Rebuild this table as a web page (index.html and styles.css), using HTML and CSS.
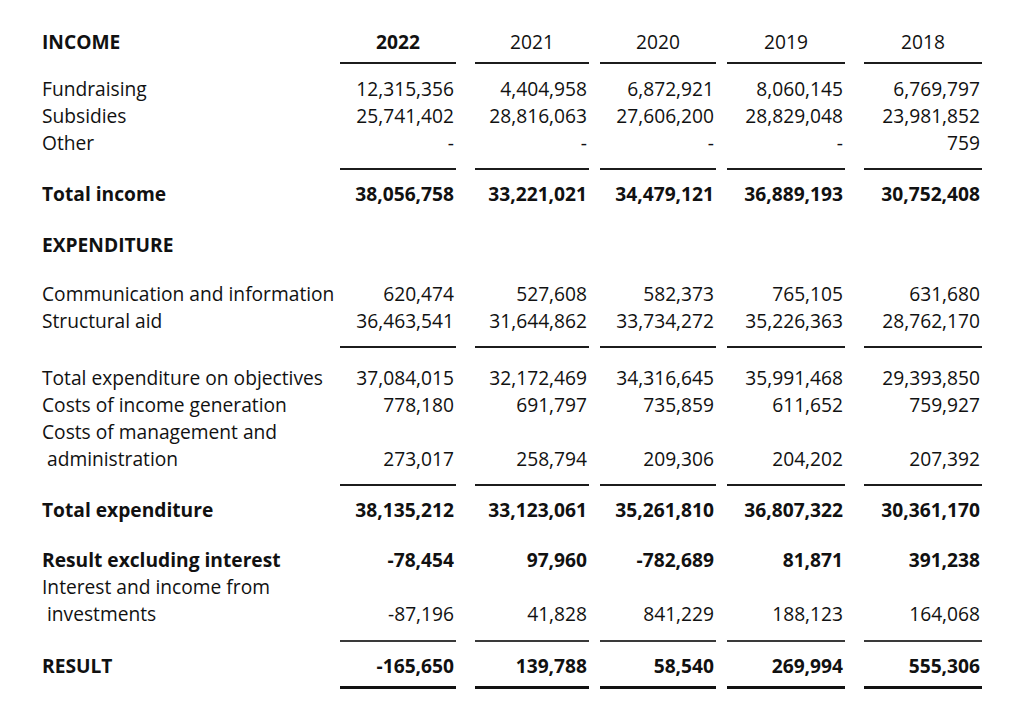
FILE: index.html
```html
<!DOCTYPE html>
<html lang="en">
<head>
<meta charset="utf-8">
<title>Income and expenditure</title>
<link rel="stylesheet" href="styles.css">
</head>
<body>
<div class="sheet">
  <div class="row head">
    <div class="label bold">INCOME</div>
    <div class="year bold">2022</div>
    <div class="year">2021</div>
    <div class="year">2020</div>
    <div class="year">2019</div>
    <div class="year">2018</div>
  </div>
  <div class="row rules r-head"><div></div><div class="rule"></div><div class="rule"></div><div class="rule"></div><div class="rule"></div><div class="rule"></div></div>

  <div class="row first">
    <div class="label">Fundraising</div>
    <div class="num">12,315,356</div><div class="num">4,404,958</div><div class="num">6,872,921</div><div class="num">8,060,145</div><div class="num">6,769,797</div>
  </div>
  <div class="row">
    <div class="label">Subsidies</div>
    <div class="num">25,741,402</div><div class="num">28,816,063</div><div class="num">27,606,200</div><div class="num">28,829,048</div><div class="num">23,981,852</div>
  </div>
  <div class="row">
    <div class="label">Other</div>
    <div class="num">-</div><div class="num">-</div><div class="num">-</div><div class="num">-</div><div class="num">759</div>
  </div>
  <div class="row rules r-sum"><div></div><div class="rule"></div><div class="rule"></div><div class="rule"></div><div class="rule"></div><div class="rule"></div></div>

  <div class="row total bold">
    <div class="label">Total income</div>
    <div class="num">38,056,758</div><div class="num">33,221,021</div><div class="num">34,479,121</div><div class="num">36,889,193</div><div class="num">30,752,408</div>
  </div>

  <div class="row section">
    <div class="label bold">EXPENDITURE</div>
  </div>

  <div class="row after-section">
    <div class="label">Communication and information</div>
    <div class="num">620,474</div><div class="num">527,608</div><div class="num">582,373</div><div class="num">765,105</div><div class="num">631,680</div>
  </div>
  <div class="row">
    <div class="label">Structural aid</div>
    <div class="num">36,463,541</div><div class="num">31,644,862</div><div class="num">33,734,272</div><div class="num">35,226,363</div><div class="num">28,762,170</div>
  </div>
  <div class="row rules r-sum"><div></div><div class="rule"></div><div class="rule"></div><div class="rule"></div><div class="rule"></div><div class="rule"></div></div>

  <div class="row sub">
    <div class="label">Total expenditure on objectives</div>
    <div class="num">37,084,015</div><div class="num">32,172,469</div><div class="num">34,316,645</div><div class="num">35,991,468</div><div class="num">29,393,850</div>
  </div>
  <div class="row">
    <div class="label">Costs of income generation</div>
    <div class="num">778,180</div><div class="num">691,797</div><div class="num">735,859</div><div class="num">611,652</div><div class="num">759,927</div>
  </div>
  <div class="row">
    <div class="label wrap">Costs of management and administration</div>
    <div class="num">273,017</div><div class="num">258,794</div><div class="num">209,306</div><div class="num">204,202</div><div class="num">207,392</div>
  </div>
  <div class="row rules r-sum"><div></div><div class="rule"></div><div class="rule"></div><div class="rule"></div><div class="rule"></div><div class="rule"></div></div>

  <div class="row total bold">
    <div class="label">Total expenditure</div>
    <div class="num">38,135,212</div><div class="num">33,123,061</div><div class="num">35,261,810</div><div class="num">36,807,322</div><div class="num">30,361,170</div>
  </div>

  <div class="row section-gap bold">
    <div class="label">Result excluding interest</div>
    <div class="num">-78,454</div><div class="num">97,960</div><div class="num">-782,689</div><div class="num">81,871</div><div class="num">391,238</div>
  </div>
  <div class="row">
    <div class="label wrap">Interest and income from investments</div>
    <div class="num">-87,196</div><div class="num">41,828</div><div class="num">841,229</div><div class="num">188,123</div><div class="num">164,068</div>
  </div>
  <div class="row rules r-sum r-light"><div></div><div class="rule"></div><div class="rule"></div><div class="rule"></div><div class="rule"></div><div class="rule"></div></div>

  <div class="row result bold">
    <div class="label">RESULT</div>
    <div class="num">-165,650</div><div class="num">139,788</div><div class="num">58,540</div><div class="num">269,994</div><div class="num">555,306</div>
  </div>
  <div class="row rules r-double"><div></div><div class="rule"></div><div class="rule"></div><div class="rule"></div><div class="rule"></div><div class="rule"></div></div>
</div>
</body>
</html>
```

FILE: styles.css
```css
* { box-sizing: border-box; }

html, body {
  margin: 0;
  padding: 0;
  background: #ffffff;
}

body {
  font-family: "Open Sans", "Noto Sans", "Liberation Sans", sans-serif;
  font-size: 19.2px;
  line-height: 27px;
  color: #111111;
}

.sheet {
  padding: 28px 0 0 42px;
  width: 1024px;
}

.row {
  display: grid;
  grid-template-columns: 298px 116px 133px 127px 129px 137px;
}

.row > :nth-child(3) { margin-left: 19px; }
.row > :nth-child(4) { margin-left: 11px; }
.row > :nth-child(5) { margin-left: 11px; }
.row > :nth-child(6) { margin-left: 19px; }

.bold { font-weight: 700; }

.label {
  white-space: nowrap;
}

.label.wrap {
  white-space: normal;
  padding-left: 5px;
  text-indent: -5px;
}

.year {
  text-align: center;
}

.num {
  text-align: right;
  padding-right: 2px;
  align-self: end;
}

.rule {
  height: 2px;
  background: #1c1c1c;
}

.r-head { margin-top: 7px; }
.first { margin-top: 11px; }

.r-sum { margin-top: 12px; }
.total { margin-top: 10px; }

.section { margin-top: 24px; }
.after-section { margin-top: 22px; }

.sub { margin-top: 16px; }

.section-gap { margin-top: 23px; }

.r-light { margin-top: 13px; }
.r-light .rule { background: #3a3a3a; height: 2px; }

.result { margin-top: 10px; }

.r-double { margin-top: 7px; }
.r-double .rule { height: 3px; background: #111111; }
```
